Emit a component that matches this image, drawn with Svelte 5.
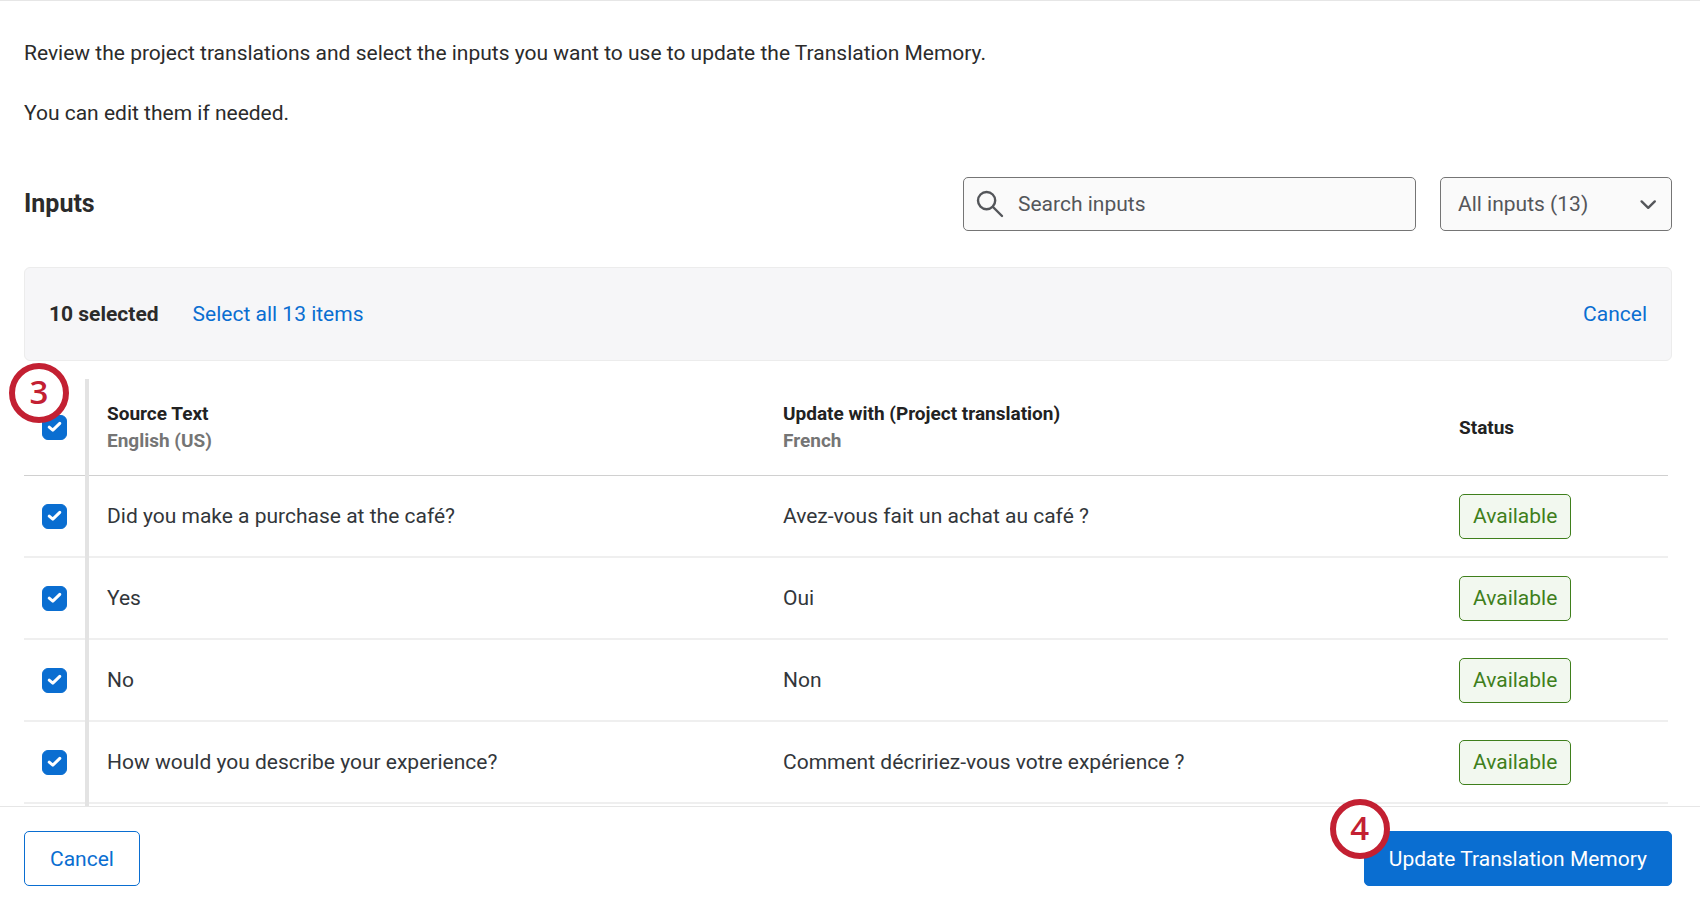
<script lang="ts">
	interface InputRow {
		id: number;
		source: string;
		translation: string;
		status: string;
		selected: boolean;
	}

	const totalItems = 13;

	let query = $state('');
	let filter = $state('all');
	let allSelected = $state(true);

	let rows = $state<InputRow[]>([
		{ id: 1, source: 'Did you make a purchase at the café?', translation: 'Avez-vous fait un achat au café ?', status: 'Available', selected: true },
		{ id: 2, source: 'Yes', translation: 'Oui', status: 'Available', selected: true },
		{ id: 3, source: 'No', translation: 'Non', status: 'Available', selected: true },
		{ id: 4, source: 'How would you describe your experience?', translation: 'Comment décririez-vous votre expérience ?', status: 'Available', selected: true }
	]);

	function toggleAll() {
		rows.forEach(row => (row.selected = allSelected));
	}
</script>

{#snippet tick()}
	<svg class="tick" viewBox="0 0 25 25" aria-hidden="true">
		<path d="M7.2 12.2l3.6 3L17.8 8.4" />
	</svg>
{/snippet}

<div class="page">
	<main>
		<div class="intro">
			<p>Review the project translations and select the inputs you want to use to update the Translation Memory.</p>
			<p>You can edit them if needed.</p>
		</div>

		<div class="toolbar">
			<h2>Inputs</h2>
			<div class="search">
				<svg viewBox="0 0 28 28" aria-hidden="true">
					<circle cx="10.6" cy="10.6" r="8.6" />
					<path d="M17 17L26 26" />
				</svg>
				<input type="text" placeholder="Search inputs" aria-label="Search inputs" bind:value={query} />
			</div>
			<div class="filter">
				<select aria-label="Filter inputs" bind:value={filter}>
					<option value="all">All inputs ({totalItems})</option>
				</select>
				<svg viewBox="0 0 16 10" aria-hidden="true">
					<path d="M1.6 2.4l6.6 6.4 6.6-6.4" />
				</svg>
			</div>
		</div>

		<div class="selection">
			<strong>10 selected</strong>
			<button type="button" class="link">Select all {totalItems} items</button>
			<button type="button" class="link end">Cancel</button>
		</div>

		<div class="table-area">
			<span class="step step-table">3</span>
			<table>
				<thead>
					<tr>
						<th class="check">
							<label class="checkbox">
								<input type="checkbox" aria-label="Select all rows" bind:checked={allSelected} onchange={toggleAll} />
								{@render tick()}
							</label>
						</th>
						<th>Source Text<span class="lang">English (US)</span></th>
						<th>Update with (Project translation)<span class="lang">French</span></th>
						<th class="status">Status</th>
					</tr>
				</thead>
				<tbody>
					{#each rows as row (row.id)}
						<tr>
							<td class="check">
								<label class="checkbox">
									<input type="checkbox" aria-label={row.source} bind:checked={row.selected} />
									{@render tick()}
								</label>
							</td>
							<td>{row.source}</td>
							<td>{row.translation}</td>
							<td><span class="badge">{row.status}</span></td>
						</tr>
					{/each}
				</tbody>
			</table>
		</div>
	</main>

	<footer>
		<button type="button" class="btn">Cancel</button>
		<div class="submit">
			<span class="step step-submit">4</span>
			<button type="button" class="btn primary">Update Translation Memory</button>
		</div>
	</footer>
</div>

<style>
	:global(body) {
		background: #fff;
	}

	.page {
		box-sizing: border-box;
		display: flex;
		flex-direction: column;
		height: 100vh;
		border-top: 1px solid #e6e6e6;
		font-family: Roboto, "Liberation Sans", sans-serif;
		font-size: 21px;
		line-height: 30px;
		color: #2b2b2b;
	}

	main {
		flex: 1;
		min-height: 0;
		display: flex;
		flex-direction: column;
		padding: 37px 28px 0 24px;
	}

	p {
		margin: 0 0 30px;
	}

	.intro p + p {
		margin-bottom: 49px;
	}

	.toolbar {
		display: flex;
		align-items: center;
		gap: 24px;
		margin-bottom: 36px;
	}

	h2 {
		flex: 1;
		margin: 0;
		font-size: 25px;
		font-weight: 700;
	}

	.search,
	.filter {
		box-sizing: border-box;
		position: relative;
		display: flex;
		align-items: center;
		height: 54px;
		border: 1px solid #757575;
		border-radius: 5px;
		background: #fafafa;
		color: #54565a;
	}

	.search {
		width: 453px;
		padding-left: 12px;
		gap: 14px;
	}

	.filter {
		width: 232px;
	}

	.search svg,
	.filter svg {
		fill: none;
		stroke: #54565a;
		stroke-width: 2.4;
		stroke-linecap: round;
		stroke-linejoin: round;
	}

	.search svg {
		width: 28px;
		height: 28px;
	}

	.filter svg {
		position: absolute;
		right: 15px;
		width: 16px;
		height: 10px;
		overflow: visible;
		pointer-events: none;
	}

	.search input,
	.filter select {
		flex: 1;
		min-width: 0;
		height: 100%;
		padding: 0;
		border: 0;
		background: none;
		font: inherit;
		color: inherit;
		outline: none;
		appearance: none;
	}

	.search input::placeholder {
		color: inherit;
		opacity: 1;
	}

	.filter select {
		padding-left: 17px;
	}

	.selection {
		display: flex;
		align-items: center;
		gap: 34px;
		padding: 31px 24px;
		border: 1px solid #ececec;
		border-radius: 6px;
		background: #f6f6f8;
	}

	.link {
		padding: 0;
		border: 0;
		background: none;
		font: inherit;
		color: #0a6ed1;
		cursor: pointer;
	}

	.end {
		margin-left: auto;
	}

	.table-area {
		position: relative;
		flex: 1;
		margin: 18px 4px 0 0;
	}

	/* divider of the frozen checkbox column, drawn over the row lines */
	.table-area::before {
		content: "";
		position: absolute;
		top: 0;
		bottom: 0;
		left: 61px;
		width: 4px;
		background: #e3e3e3;
	}

	table {
		width: 100%;
		table-layout: fixed;
		border-collapse: separate;
		border-spacing: 0;
	}

	th,
	td {
		box-sizing: border-box;
		padding: 0 18px;
		text-align: left;
		vertical-align: middle;
	}

	th {
		height: 97px;
		border-bottom: 1px solid #d0d0d0;
		font-size: 19px;
		line-height: 27px;
		font-weight: 700;
		color: #222;
	}

	td {
		height: 82px;
		border-bottom: 2px solid #efefef;
		color: #32363a;
	}

	.check {
		width: 65px;
	}

	.status {
		width: 227px;
	}

	.lang {
		display: block;
		color: #757575;
	}

	.checkbox {
		display: grid;
		width: 25px;
		height: 25px;
	}

	.checkbox input,
	.tick {
		grid-area: 1 / 1;
		width: 25px;
		height: 25px;
		margin: 0;
	}

	.checkbox input {
		appearance: none;
		box-sizing: border-box;
		border: 1px solid #757575;
		border-radius: 6px;
	}

	.checkbox input:checked {
		border-color: #0a6ed1;
		background: #0a6ed1;
	}

	.tick {
		fill: none;
		stroke: #fff;
		stroke-width: 3;
		stroke-linecap: round;
		stroke-linejoin: round;
		pointer-events: none;
	}

	.badge {
		display: inline-block;
		padding: 6px 13px 7px;
		border: 1px solid #3f7f1c;
		border-radius: 5px;
		background: #f2f8ef;
		color: #3f7f1c;
	}

	footer {
		display: flex;
		justify-content: space-between;
		padding: 24px 28px 12px 24px;
		border-top: 1px solid #e6e6e6;
	}

	.btn {
		height: 55px;
		padding: 0 25px;
		border: 1px solid #0a6ed1;
		border-radius: 5px;
		background: #fff;
		font: inherit;
		color: #0a6ed1;
		cursor: pointer;
	}

	.primary {
		padding: 0 24px;
		background: #0a6ed1;
		color: #fff;
	}

	.submit {
		position: relative;
	}

	.step {
		box-sizing: border-box;
		position: absolute;
		z-index: 1;
		width: 60px;
		height: 60px;
		border: 6px solid #c32032;
		border-radius: 50%;
		background: #fff;
		font-family: "Open Sans", "Noto Sans", sans-serif;
		font-size: 33px;
		font-weight: 600;
		line-height: 46px;
		text-align: center;
		color: #c32032;
	}

	.step-table {
		top: -16px;
		left: -15px;
	}

	.step-submit {
		top: -32px;
		left: -34px;
	}
</style>
